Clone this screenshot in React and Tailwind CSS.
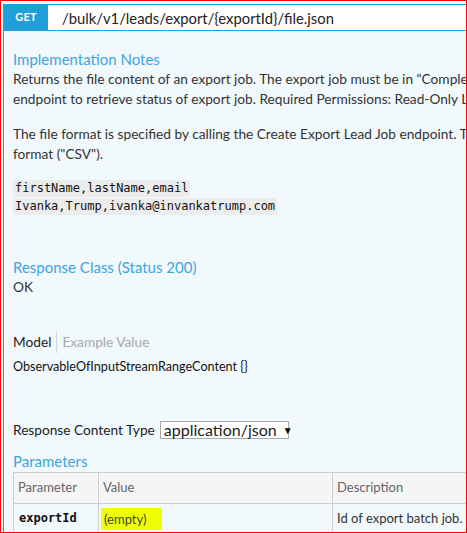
export default function App() {
  const font = { fontFamily: 'Lato, "Open Sans", sans-serif' };
  return (
    <div className="w-[467px] h-[533px] border border-[#ff0000] bg-white overflow-hidden pt-[3px] pl-[2px]" style={font}>
      <div className="w-[500px] h-[560px] border border-[#1ba4e0] bg-[#f1f9fd]">
        <div className="h-[26px] flex items-center bg-white border-b border-[#1ba4e0]">
          <div className="w-[44px] h-full bg-[#1f9fda] text-white text-[11px] font-bold flex items-center justify-center tracking-wide">GET</div>
          <div className="ml-[14px] text-[14.8px] text-[#222] leading-[20px]">/bulk/v1/leads/export/{'{'}exportId{'}'}/file.json</div>
        </div>
        <div className="pl-[9px] text-[13.7px] text-[#333]">
          <div className="mt-[18px] text-[15px] leading-[20px] text-[#3ea5dd]">Implementation Notes</div>
          <p className="leading-[20px] whitespace-nowrap">Returns the file content of an export job. The export job must be in "Completed" state. Use Get Export Lead Job Status</p>
          <p className="leading-[20px] whitespace-nowrap">endpoint to retrieve status of export job. Required Permissions: Read-Only Lead, Read-Write Lead</p>
          <p className="mt-[15px] leading-[20px] whitespace-nowrap">The file format is specified by calling the Create Export Lead Job endpoint. The following is an example of the file</p>
          <p className="leading-[20px] whitespace-nowrap">format ("CSV").</p>
          <div className="mt-[16px] flex flex-col items-start gap-[1px] text-[12px] text-[#111]" style={{ fontFamily: '"DejaVu Sans Mono", "Liberation Mono", monospace' }}>
            <span className="bg-[#ececec] leading-[17px] px-[2px]">firstName,lastName,email</span>
            <span className="bg-[#ececec] leading-[17px] px-[2px]">Ivanka,Trump,ivanka@invankatrump.com</span>
          </div>
          <div className="mt-[42px] text-[15px] leading-[20px] text-[#3ea5dd]">Response Class (Status 200)</div>
          <div className="leading-[20px]">OK</div>
          <div className="mt-[34px] flex items-center leading-[20px]">
            <span className="text-[#222] pr-[5px]">Model</span>
            <span className="border-l border-[#d6d6d6] pl-[5px] h-[22px] flex items-center text-[#a8a8a8]">Example Value</span>
          </div>
          <div className="mt-[4px] leading-[20px] text-[12.6px] text-[#111]">ObservableOfInputStreamRangeContent {'{}'}</div>
          <div className="mt-[43px] flex items-center leading-[20px]">
            <span className="text-[#222]">Response Content Type</span>
            <span className="ml-[5px] h-[18px] w-[129px] border border-[#a9a9a9] bg-white flex items-center pl-[3px] text-[16px] text-[#222]">
              application/json
              <span className="ml-[6px] text-[10px] text-black">▼</span>
            </span>
          </div>
          <div className="mt-[11px] text-[15px] leading-[20px] text-[#3ea5dd]">Parameters</div>
          <div className="mt-[1px] w-[480px] border border-[#cfcfcf]">
            <div className="flex h-[31px] bg-[#f5f5f5] border-b border-[#cfcfcf] text-[13px] text-[#666] items-center">
              <div className="w-[85px] h-full flex items-center pl-[4px] border-r border-[#cfcfcf]">Parameter</div>
              <div className="w-[234px] h-full flex items-center pl-[4px] border-r border-[#cfcfcf]">Value</div>
              <div className="flex-1 h-full flex items-center pl-[4px]">Description</div>
            </div>
            <div className="flex h-[40px] text-[13px] text-[#333]">
              <div className="w-[85px] h-full flex pt-[5px] pl-[5px] border-r border-[#cfcfcf] font-bold text-[12px] text-[#111]" style={{ fontFamily: '"DejaVu Sans Mono", "Liberation Mono", monospace' }}>exportId</div>
              <div className="w-[234px] h-full flex items-start pt-[4px] pl-[2px] border-r border-[#cfcfcf]">
                <span className="bg-[#eeff00] rounded-[2px] px-[3px] pr-[16px] leading-[22px] text-[#444]">(empty)</span>
              </div>
              <div className="flex-1 h-full flex pt-[5px] pl-[4px]">Id of export batch job.</div>
            </div>
          </div>
        </div>
      </div>
    </div>
  );
}
